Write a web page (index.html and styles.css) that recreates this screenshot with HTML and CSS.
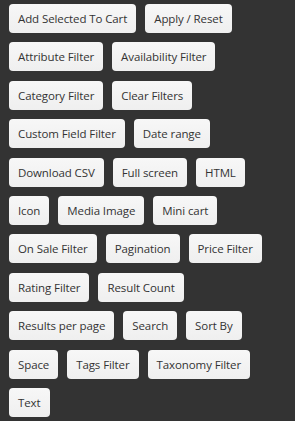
FILE: index.html
```html
<!DOCTYPE html>
<html lang="en">
<head>
    <meta charset="UTF-8">
    <meta name="viewport" content="width=device-width, initial-scale=1.0">
    <title>Blocks</title>
<link rel="stylesheet" href="styles.css">
</head>
<body>
<div class="block-list">
    <button class="block-btn">Add Selected To Cart</button>
    <button class="block-btn">Apply / Reset</button>
    <button class="block-btn">Attribute Filter</button>
    <button class="block-btn">Availability Filter</button>
    <button class="block-btn">Category Filter</button>
    <button class="block-btn">Clear Filters</button>
    <button class="block-btn">Custom Field Filter</button>
    <button class="block-btn">Date range</button>
    <button class="block-btn">Download CSV</button>
    <button class="block-btn">Full screen</button>
    <button class="block-btn">HTML</button>
    <button class="block-btn">Icon</button>
    <button class="block-btn">Media Image</button>
    <button class="block-btn">Mini cart</button>
    <button class="block-btn">On Sale Filter</button>
    <button class="block-btn">Pagination</button>
    <button class="block-btn">Price Filter</button>
    <button class="block-btn">Rating Filter</button>
    <button class="block-btn">Result Count</button>
    <button class="block-btn">Results per page</button>
    <button class="block-btn">Search</button>
    <button class="block-btn">Sort By</button>
    <button class="block-btn">Space</button>
    <button class="block-btn">Tags Filter</button>
    <button class="block-btn">Taxonomy Filter</button>
    <button class="block-btn">Text</button>
</div>
</body>
</html>
```

FILE: styles.css
```css
body {
    margin: 0;
    background-color: #333333;
    font-family: "Open Sans", Arial, sans-serif;
}
.block-list {
    display: flex;
    flex-wrap: wrap;
    align-items: flex-start;
    gap: 9.4px 9px;
    padding: 4px 9px;
}
.block-btn {
    height: 29px;
    padding: 0 9px;
    font-family: inherit;
    font-size: 11.5px;
    letter-spacing: -0.1px;
    color: #333333;
    background: linear-gradient(#f7f7f7, #efefef);
    border: none;
    border-radius: 4px;
    cursor: pointer;
}
```
